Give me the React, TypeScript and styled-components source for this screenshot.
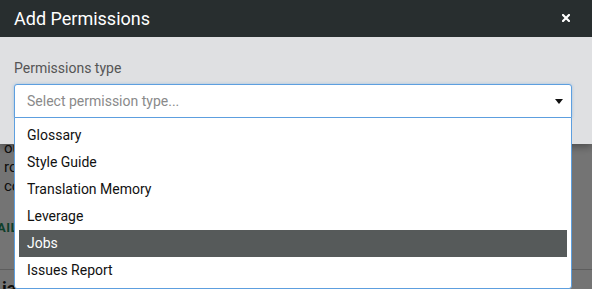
import styled, { createGlobalStyle } from "styled-components"

const items = ["Glossary", "Style Guide", "Translation Memory", "Leverage", "Jobs", "Issues Report"]

const GlobalStyle = createGlobalStyle`
    html, body {
        margin: 0;
        padding: 0;
        width: 592px;
        height: 289px;
        overflow: hidden;
        font-family: "Roboto", "Liberation Sans", sans-serif;
    }
`

function App() {
    return (
        <>
            <GlobalStyle />
            <Page>
                <PageColumn>
                    <PageText>ou</PageText>
                    <PageText>ro</PageText>
                    <PageText>co</PageText>
                    <PageLink>AIL</PageLink>
                </PageColumn>
                <Divider />
                <PageHeading>ia</PageHeading>
            </Page>
            <Backdrop />
            <Modal>
                <Header>
                    <Title>Add Permissions</Title>
                    <CloseButton>
                        <svg width="8" height="8" viewBox="0 0 8 8">
                            <path d="M1 1L7 7M7 1L1 7" stroke="#fff" strokeWidth="2.2" strokeLinecap="square" />
                        </svg>
                    </CloseButton>
                </Header>
                <Body>
                    <Label>Permissions type</Label>
                    <SelectWrap>
                        <Select>
                            <Placeholder>Select permission type...</Placeholder>
                            <svg width="8" height="5" viewBox="0 0 8 5">
                                <path d="M0 0H8L4 5Z" fill="#111" />
                            </svg>
                        </Select>
                        <Menu>
                            {items.map((item) => (
                                <Option key={item} $active={item === "Jobs"}>{item}</Option>
                            ))}
                        </Menu>
                    </SelectWrap>
                </Body>
            </Modal>
        </>
    )
}

export default App

const Page = styled.div`
    height: 289px;
    background: #fff;
    padding-top: 139px;
    box-sizing: border-box;
    color: #222;
`
const PageColumn = styled.div`
    width: 14px;
    overflow: hidden;
    white-space: nowrap;
`
const PageText = styled.div`
    font-size: 15px;
    line-height: 19px;
    padding-left: 4px;
`
const PageLink = styled.div`
    margin-top: 24px;
    margin-left: -3px;
    font-size: 13px;
    font-weight: bold;
    color: #1f8a5e;
    letter-spacing: 0.5px;
`
const Divider = styled.div`
    height: 1px;
    background: #ccc;
    margin-top: 34px;
`
const PageHeading = styled.div`
    width: 14px;
    overflow: hidden;
    margin-top: 8px;
    padding-left: 2px;
    font-size: 18px;
    font-weight: bold;
`
const Backdrop = styled.div`
    position: fixed;
    inset: 0;
    background: rgba(0, 0, 0, 0.545);
`
const Modal = styled.div`
    position: fixed;
    top: 0;
    left: 0;
    right: 0;
    box-shadow: 0 3px 8px rgba(0, 0, 0, 0.35);
`
const Header = styled.div`
    display: flex;
    align-items: center;
    justify-content: space-between;
    height: 37px;
    padding: 0 22px 0 14px;
    background: #282e2f;
`
const Title = styled.div`
    color: #fff;
    font-size: 18px;
    padding-bottom: 1px;
`
const CloseButton = styled.div`
    display: flex;
    margin-top: -1px;
`
const Body = styled.div`
    background: #dfe0e2;
    padding: 22px 20px 26px 14px;
`
const Label = styled.div`
    font-size: 14px;
    line-height: 18px;
    color: #555;
    margin-bottom: 7px;
`
const SelectWrap = styled.div`
    position: relative;
`
const Select = styled.div`
    display: flex;
    align-items: center;
    justify-content: space-between;
    height: 34px;
    box-sizing: border-box;
    padding: 0 8px 0 12px;
    background: #fff;
    border: 1px solid #5d9fdf;
    border-radius: 3px 3px 0 0;
    box-shadow: 0 0 3px rgba(93, 159, 223, 0.5);
`
const Placeholder = styled.span`
    font-size: 14px;
    color: #8a8a8a;
`
const Menu = styled.div`
    position: absolute;
    top: 100%;
    left: 0;
    right: 0;
    margin-top: -1px;
    padding: 4px 0 4px;
    background: #fff;
    border: 1px solid #5d9fdf;
    border-radius: 0 0 3px 3px;
`
const Option = styled.div<{ $active?: boolean }>`
    height: 27px;
    line-height: 26px;
    margin: 0 4px;
    padding-left: 8px;
    font-size: 14px;
    color: ${(p) => (p.$active ? "#fff" : "#111")};
    background: ${(p) => (p.$active ? "#565a5a" : "transparent")};
`
